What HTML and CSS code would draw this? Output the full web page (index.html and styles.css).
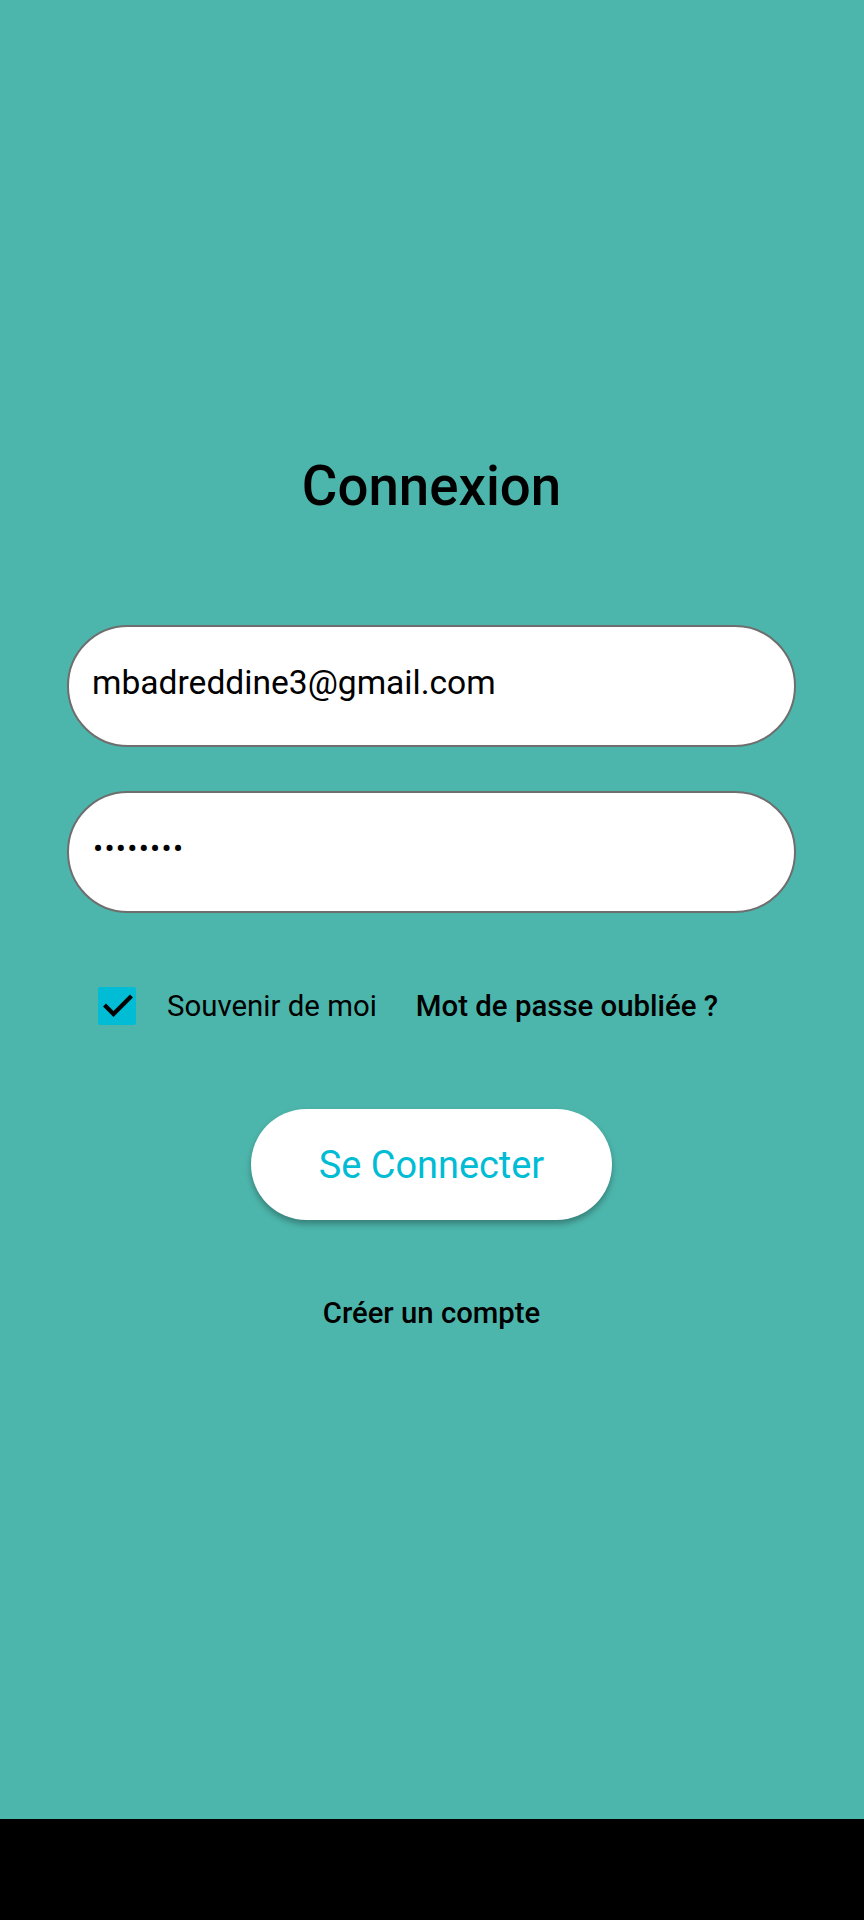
FILE: index.html
```html
<!DOCTYPE html>
<html lang="fr">
<head>
<meta charset="utf-8">
<title>Connexion</title>
<link rel="stylesheet" href="styles.css">
</head>
<body>
<div class="screen">
  <main class="content">
    <h1 class="title">Connexion</h1>
    <div class="field">mbadreddine3@gmail.com</div>
    <div class="field field-pass">••••••••</div>
    <div class="options">
      <span class="checkbox">
        <svg width="38" height="38" viewBox="0 0 38 38"><path d="M8 19.5 L15.5 27 L32 10.5" fill="none" stroke="#000" stroke-width="4.2" stroke-linecap="square"/></svg>
      </span>
      <span class="remember">Souvenir de moi</span>
      <span class="forgot">Mot de passe oubliée ?</span>
    </div>
    <button class="login">Se Connecter</button>
    <div class="create">Créer un compte</div>
  </main>
  <div class="navbar"></div>
</div>
</body>
</html>
```
FILE: styles.css
```css
html, body {
  margin: 0;
  padding: 0;
}
body {
  font-family: Roboto, "Noto Sans", sans-serif;
  color: #000;
}
.screen {
  width: 864px;
  height: 1920px;
  display: flex;
  flex-direction: column;
}
.content {
  height: 1819px;
  background: #4db6ac;
  display: flex;
  flex-direction: column;
  align-items: center;
  padding: 454px 68px 0 67px;
  box-sizing: border-box;
}
.title {
  margin: 0;
  font-size: 54.6px;
  line-height: 64px;
  font-weight: 500;
}
.field {
  margin-top: 107px;
  width: 729px;
  height: 122px;
  box-sizing: border-box;
  border: 2px solid #6e6e6e;
  border-radius: 61px;
  background: #fff;
  display: flex;
  align-items: center;
  padding-left: 23px;
  padding-bottom: 7px;
  font-size: 33.6px;
}
.field-pass {
  margin-top: 44px;
  font-size: 30px;
  letter-spacing: 1.3px;
  padding-left: 24px;
}
.options {
  margin-top: 74px;
  align-self: stretch;
  display: flex;
  align-items: center;
  height: 38px;
  padding-left: 31px;
}
.checkbox {
  width: 38px;
  height: 38px;
  background: #00bcd4;
  border-radius: 2px;
  display: block;
}
.checkbox svg {
  display: block;
}
.remember {
  margin-left: 31px;
  font-size: 29.4px;
}
.forgot {
  margin-left: 39px;
  font-size: 29.4px;
  font-weight: 500;
}
.login {
  margin-top: 84px;
  width: 361px;
  height: 111px;
  border: none;
  border-radius: 56px;
  background: #fff;
  color: #00bcd4;
  font-family: Roboto, "Noto Sans", sans-serif;
  font-size: 37.9px;
  box-shadow: 0 4px 6px rgba(0, 0, 0, 0.3);
  padding: 0;
}
.create {
  margin-top: 75px;
  font-size: 29.3px;
  line-height: 36px;
  font-weight: 500;
}
.navbar {
  height: 101px;
  background: #000;
}
```
